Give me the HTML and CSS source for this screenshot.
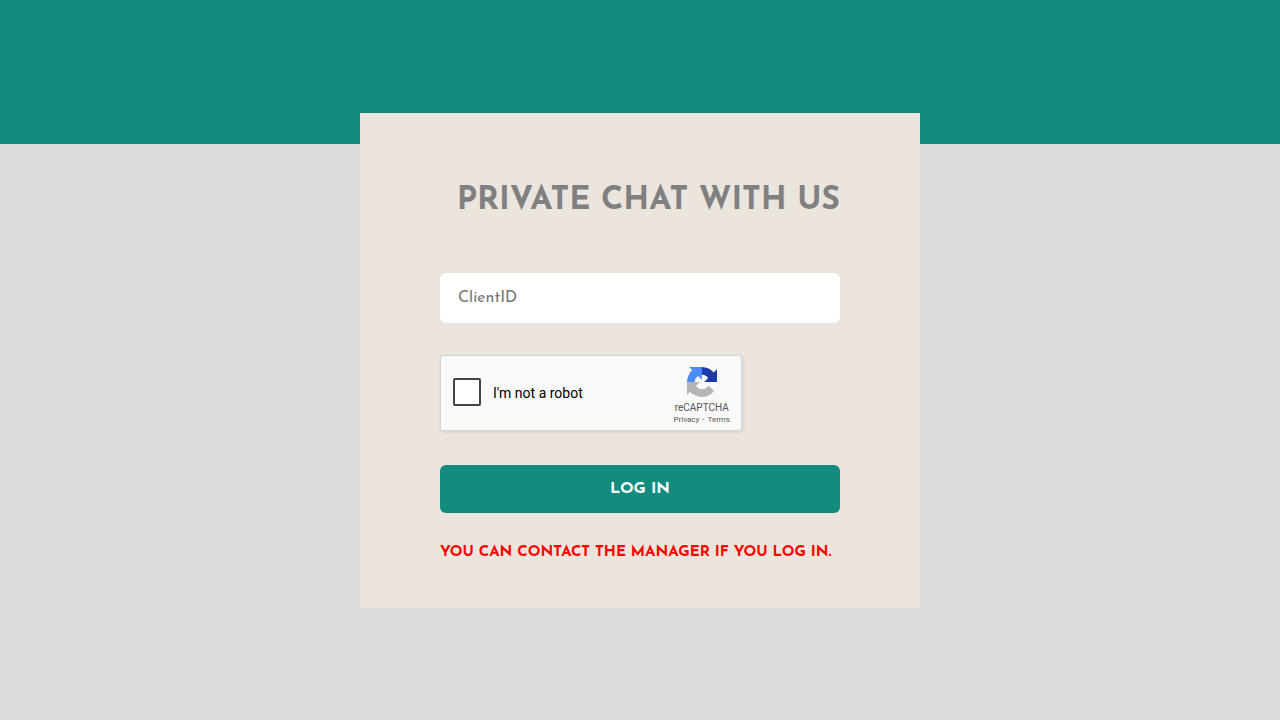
FILE: index.html
```
<!doctype html>
<html lang="en">
<head>
    <meta charset="utf-8">
    <meta name="viewport" content="width=device-width, initial-scale=1">
    <title>Private chat</title>
    <link rel="stylesheet" href="styles.css">
</head>
<body>
    <main class="page">
        <form class="login">
            <h1 class="title">PRIVATE CHAT WITH US</h1>

            <input class="client-id" type="text" name="clientid" placeholder="ClientID" aria-label="ClientID">

            <div class="captcha">
                <input class="captcha-check" type="checkbox" id="robot">
                <label class="captcha-label" for="robot">I'm not a robot</label>
                <div class="captcha-brand">
                    <svg class="captcha-logo" viewBox="0 0 64 64" aria-hidden="true">
                        <path fill="#1c3aa9" d="M64 31.955l-.033-1.37V4.687l-7.16 7.16C50.948 4.674 42.033.093 32.05.093c-10.4 0-19.622 4.96-25.458 12.64l11.736 11.86a15.55 15.55 0 0 1 4.754-5.334c2.05-1.6 4.952-2.906 8.968-2.906.485 0 .86.057 1.135.163 4.976.393 9.288 3.14 11.828 7.124l-8.307 8.307L64 31.953"/>
                        <path fill="#4a8df8" d="M31.862.094l-1.37.033H4.594l7.16 7.16C4.58 13.147 0 22.06 0 32.046c0 10.4 4.96 19.622 12.64 25.458L24.5 45.768a15.55 15.55 0 0 1-5.334-4.754c-1.6-2.05-2.906-4.952-2.906-8.968 0-.485.057-.86.163-1.135.393-4.976 3.14-9.288 7.124-11.828l8.307 8.307L31.86.095"/>
                        <path fill="#b4b4b4" d="M.001 32.045l.033 1.37v25.898l7.16-7.16c5.86 7.173 14.774 11.754 24.76 11.754 10.4 0 19.622-4.96 25.458-12.64l-11.736-11.86a15.55 15.55 0 0 1-4.754 5.334c-2.05 1.6-4.952 2.906-8.968 2.906-.485 0-.86-.057-1.135-.163-4.976-.393-9.288-3.14-11.828-7.124l8.307-8.307c-10.522.04-22.4.066-27.295-.005"/>
                    </svg>
                    <span class="captcha-name">reCAPTCHA</span>
                    <span class="captcha-links"><a href="#">Privacy</a><span>-</span><a href="#">Terms</a></span>
                </div>
            </div>

            <button class="submit" type="submit">LOG IN</button>

            <p class="note">YOU CAN CONTACT THE MANAGER IF YOU LOG IN.</p>
        </form>
    </main>
</body>
</html>
```

FILE: styles.css
```
* {
    box-sizing: border-box;
}

body {
    margin: 0;
    font-family: "Josefin Sans", Lato, sans-serif;
    background: linear-gradient(#128c7e 20vh, #dcdcdc 20vh);
}

.page {
    display: flex;
    align-items: center;
    justify-content: center;
    min-height: 100vh;
}

.login {
    width: 100%;
    max-width: 560px;
    padding: 68px 80px 44px;
    background: #ece5dd;
}

.title {
    margin: 0 0 52px;
    font-size: 32px;
    line-height: 40px;
    text-align: right;
    color: gray;
}

.client-id {
    display: block;
    width: 100%;
    height: 50px;
    padding: 0 18px;
    border: 0;
    border-radius: 6px;
    font-family: inherit;
    font-size: 16px;
    background: white;
}

.client-id::placeholder {
    color: #757575;
}

/* captcha */
.captcha {
    display: flex;
    align-items: center;
    width: 302px;
    max-width: 100%;
    height: 76px;
    margin: 32px 0 34px;
    padding: 0 11px 0 12px;
    border: 1px solid #d3d3d3;
    border-radius: 3px;
    font-family: Roboto, sans-serif;
    background: #f9f9f9;
    box-shadow: 1px 1px 2px 1px rgba(0, 0, 0, 0.06);
}

.captcha-check {
    appearance: none;
    width: 28px;
    height: 28px;
    margin: 0 12px 2px 0;
    border: 2px solid #444;
    border-radius: 2px;
    background: white;
}

.captcha-label {
    font-size: 14px;
    line-height: 18px;
}

.captcha-brand {
    display: flex;
    flex-direction: column;
    align-items: center;
    margin-left: auto;
    padding-top: 8px;
    color: #555;
}

.captcha-logo {
    width: 30px;
    height: 30px;
    margin-bottom: 5px;
}

.captcha-name {
    font-size: 10px;
    line-height: 12px;
}

.captcha-links {
    display: flex;
    gap: 3px;
    font-size: 8px;
    line-height: 12px;
}

.captcha-links a {
    color: inherit;
    text-decoration: none;
}

.submit {
    display: block;
    width: 100%;
    height: 48px;
    border: 0;
    border-radius: 6px;
    font-family: inherit;
    font-size: 16px;
    font-weight: bold;
    color: white;
    background: #128c7e;
}

.note {
    margin: 29px 0 0;
    font-size: 15px;
    font-weight: bold;
    line-height: 22px;
    color: red;
}
```
